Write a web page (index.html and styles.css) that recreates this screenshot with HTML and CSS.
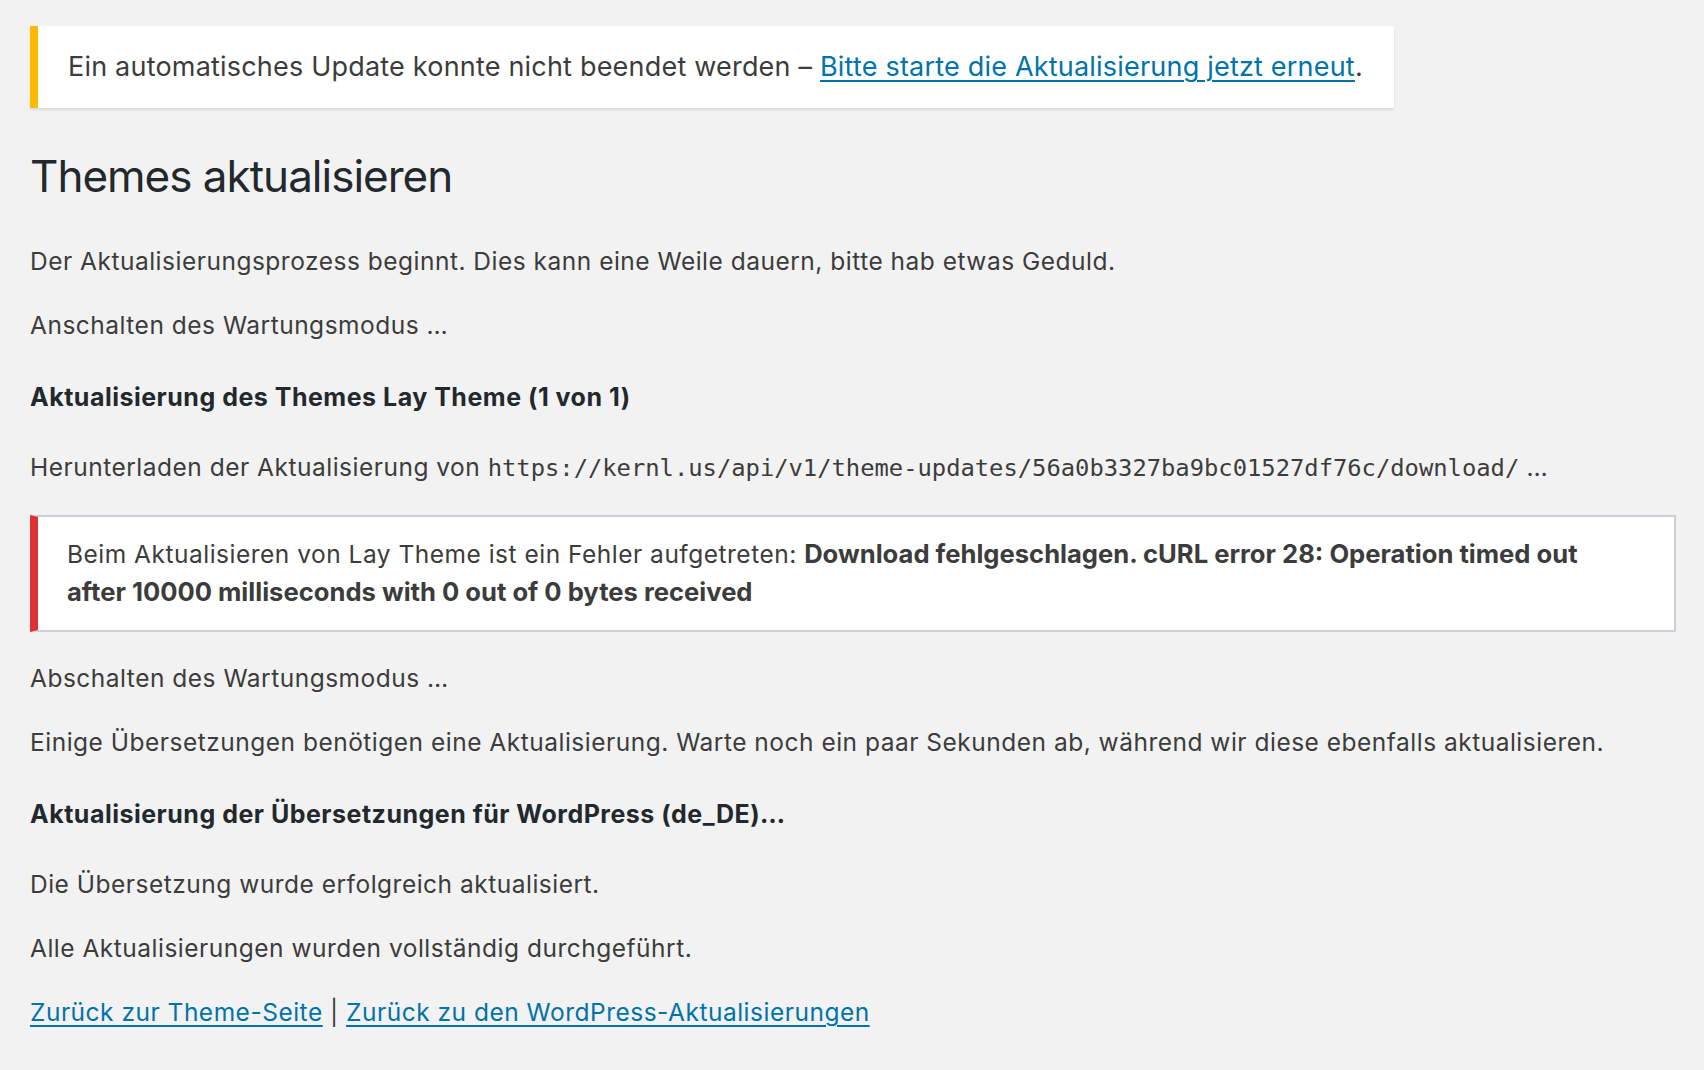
FILE: index.html
```html
<!DOCTYPE html>
<html lang="de">
<head>
    <meta charset="UTF-8">
    <meta name="viewport" content="width=device-width, initial-scale=1.0">
    <title>Themes aktualisieren</title>
    <link rel="stylesheet" href="styles.css">
</head>
<body>
    <div class="wrap">
        <div class="notice notice-warning">
            <p>Ein automatisches Update konnte nicht beendet werden – <a href="#">Bitte starte die Aktualisierung jetzt erneut</a>.</p>
        </div>

        <h1 class="page-title">Themes aktualisieren</h1>

        <p>Der Aktualisierungsprozess beginnt. Dies kann eine Weile dauern, bitte hab etwas Geduld.</p>
        <p>Anschalten des Wartungsmodus …</p>

        <h4 class="step-title">Aktualisierung des Themes Lay Theme (1 von 1)</h4>

        <p>Herunterladen der Aktualisierung von <span class="mono">https://kernl.us/api/v1/theme-updates/56a0b3327ba9bc01527df76c/download/</span> …</p>

        <div class="notice notice-error">
            <p>Beim Aktualisieren von Lay Theme ist ein Fehler aufgetreten: <strong>Download fehlgeschlagen. cURL error 28: Operation timed out after 10000 milliseconds with 0 out of 0 bytes received</strong></p>
        </div>

        <p>Abschalten des Wartungsmodus …</p>
        <p>Einige Übersetzungen benötigen eine Aktualisierung. Warte noch ein paar Sekunden ab, während wir diese ebenfalls aktualisieren.</p>

        <h4 class="step-title">Aktualisierung der Übersetzungen für WordPress (de_DE)…</h4>

        <p>Die Übersetzung wurde erfolgreich aktualisiert.</p>
        <p>Alle Aktualisierungen wurden vollständig durchgeführt.</p>
        <p class="back-links"><a href="#">Zurück zur Theme-Seite</a> | <a href="#">Zurück zu den WordPress-Aktualisierungen</a></p>
    </div>
</body>
</html>
```

FILE: styles.css
```css
* {
    margin: 0;
    padding: 0;
    box-sizing: border-box;
}

body {
    font-family: Inter, "Noto Sans", Roboto, sans-serif;
    background: #f2f2f2;
    color: #3c3c3c;
    font-size: 24.5px;
    letter-spacing: 0.5px;
}

.wrap {
    padding: 26px 28px 0 30px;
}

p {
    line-height: 38px;
    margin: 26px 0;
}

a {
    color: #0073aa;
    text-decoration: underline;
    text-decoration-thickness: 2px;
    text-underline-offset: 4px;
}

.notice {
    background: #fff;
    border-left: 8px solid #fff;
}

.notice p {
    margin: 0;
}

.notice-warning {
    width: 1364px;
    border-left-color: #ffb900;
    padding: 22px 30px;
    box-shadow: 0 2px 2px rgba(0, 0, 0, 0.1);
}

.notice-warning p {
    font-size: 27px;
    letter-spacing: 0.2px;
}

.notice-error {
    border: 2px solid #ccd0d4;
    border-left: 8px solid #dc3232;
    padding: 18px 60px 19px 29px;
    margin: 28px 0 27px;
}

.notice-error strong {
    font-weight: 700;
    font-size: 25.6px;
    letter-spacing: 0;
}

.page-title {
    font-size: 44px;
    font-weight: 400;
    letter-spacing: -1px;
    line-height: 60px;
    color: #23282d;
    margin: 38px 0 36px;
}

.step-title {
    font-size: 25px;
    font-weight: 700;
    line-height: 38px;
    color: #23282d;
    margin: 34px 0 32px;
}

.mono {
    font-family: "DejaVu Sans Mono", "Liberation Mono", monospace;
    font-size: 23.8px;
    letter-spacing: 0;
}

.back-links {
    color: #3c3c3c;
}
```
